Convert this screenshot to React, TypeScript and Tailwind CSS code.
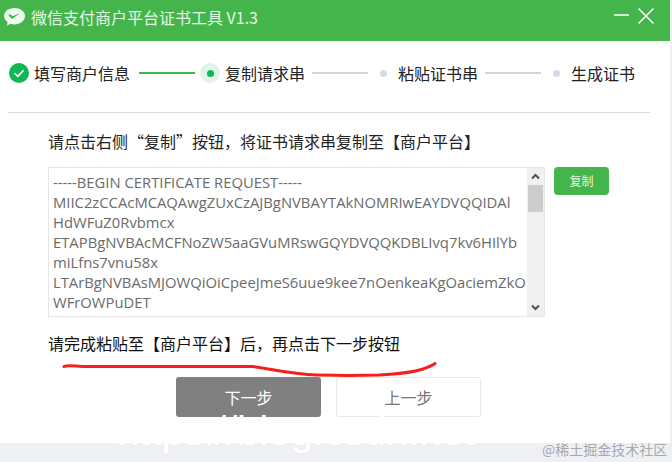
import React from 'react';

const certLines = [
  '-----BEGIN CERTIFICATE REQUEST-----',
  'MIIC2zCCAcMCAQAwgZUxCzAJBgNVBAYTAkNOMRIwEAYDVQQIDAl',
  'HdWFuZ0Rvbmcx',
  'ETAPBgNVBAcMCFNoZW5aaGVuMRswGQYDVQQKDBLIvq7kv6HIlYb',
  'miLfns7vnu58x',
  'LTArBgNVBAsMJOWQiOiCpeeJmeS6uue9kee7nOenkeaKgOaciemZkO',
  'WFrOWPuDET',
];

const Done = () => (
  <svg width="20" height="20" viewBox="0 0 20 20" className="shrink-0">
    <circle cx="10" cy="10" r="10" fill="#0fb853" />
    <path d="M5.500 10.200 8.800 13.300 14.600 7.200" fill="none" stroke="#fff" strokeWidth="1.600" />
  </svg>
);

const Line = ({ active }: { active?: boolean }) => (
  <div className={`h-[2px] w-14 shrink-0 ${active ? 'bg-[#43b54b]' : 'bg-[#d3d3d6]'}`} />
);

const Pending = () => (
  <div className="w-[7px] h-[7px] rounded-full bg-[#d5d9e6] shrink-0" />
);

export default function App() {
  return (
    <div className="relative w-[672px] h-[462px] bg-[#eff0f4] overflow-hidden font-['Noto_Sans_CJK_SC','Liberation_Sans',sans-serif]">
      <div className="w-[670px] h-[443px] bg-white flex flex-col">
        <header className="h-[41px] bg-[#43b54b] flex items-center shrink-0 pl-[3px] pr-4">
          <svg width="23" height="20" viewBox="0 0 23 20" className="shrink-0 mb-[7px]">
            <path d="M11.500 1C5.600 1 1 4.600 1 9c0 2.400 1.400 4.600 3.600 6L4 18.700l3.600-1.900c1.200.4 2.500.6 3.900.6 5.800 0 10.500-3.900 10.500-8.400S17.300 1 11.500 1Z" fill="#eef9ef" />
            <path d="M5.500 8.300l3.600 3.700 8.200-6-7.600 3.200-2.800-2.200-1.400 1.300Z" fill="#43b54b" />
          </svg>
          <span className="ml-[5px] mb-[7px] text-[16px] leading-5 text-[#e6f6e7]">
            微信支付商户平台证书工具 V1.3
          </span>
          <svg width="40" height="16" viewBox="0 0 40 16" className="ml-auto mb-[9px] shrink-0">
            <path d="M0 7H15M24.500 .5 39.500 15.500M39.500 .5 24.500 15.500" stroke="#fff" strokeWidth="1.500" fill="none" />
          </svg>
        </header>

        <div className="flex items-center h-[20px] mt-[22px] pl-[9px] text-[16px] text-[#222]">
          <Done />
          <span className="ml-[5px] w-[96px]">填写商户信息</span>
          <div className="ml-[9px]"><Line active /></div>
          <div className="ml-[5px] w-5 h-5 rounded-full bg-[#e2f4e7] flex items-center justify-center shrink-0">
            <div className="w-[7px] h-[7px] rounded-full bg-[#0fb853]" />
          </div>
          <span className="ml-[5px] w-[80px]">复制请求串</span>
          <div className="ml-[7px]"><Line /></div>
          <div className="ml-[12px]"><Pending /></div>
          <span className="ml-[11px] w-[80px]">粘贴证书串</span>
          <div className="ml-[7px]"><Line /></div>
          <div className="ml-[12px]"><Pending /></div>
          <span className="ml-[11px]">生成证书</span>
        </div>

        <div className="h-px bg-[#d9d9d9] mt-[29px] ml-2 mr-5" />

        <p className="mt-[18px] ml-[48px] text-[16px] leading-5 text-[#222]">
          请点击右侧“复制”按钮，将证书请求串复制至【商户平台】
        </p>

        <div className="flex items-start mt-4 ml-[48px]">
          <div className="w-[497px] h-[150px] border border-[#e6e6e6] flex overflow-hidden">
            <div className="flex-1 min-w-0 pl-[4px] pt-[4px] text-[14.800px] leading-[20px] text-[#6b6b6b] font-['Open_Sans','Noto_Sans',sans-serif] whitespace-nowrap overflow-hidden">
              {certLines.map((line) => (
                <div key={line}>{line}</div>
              ))}
            </div>
            <div className="w-[17px] bg-[#f0f0f0] flex flex-col items-center shrink-0">
              <svg width="17" height="17" viewBox="0 0 17 17">
                <path d="M5 10.500 8.500 7l3.500 3.500" stroke="#505050" strokeWidth="2" fill="none" />
              </svg>
              <div className="w-[15px] h-[27px] bg-[#cdcdcd]" />
              <svg width="17" height="17" viewBox="0 0 17 17" className="mt-auto">
                <path d="M5 6.500 8.500 10 12 6.500" stroke="#505050" strokeWidth="2" fill="none" />
              </svg>
            </div>
          </div>
          <button className="ml-[9px] w-[55px] h-7 rounded-[4px] bg-[#43b54b] text-[12px] text-[#e6f6e7]">复制</button>
        </div>

        <p className="mt-[16px] ml-[48px] text-[16px] leading-5 text-[#111]">
          请完成粘贴至【商户平台】后，再点击下一步按钮
        </p>

        <div className="flex gap-[15px] mt-6 pl-[176px]">
          <button className="w-[145px] h-10 rounded-[3px] bg-[#808080] text-[16px] text-white">下一步</button>
          <button className="w-[145px] h-10 rounded-[3px] border border-[#e8e8e8] bg-white text-[16px] text-[#777]">上一步</button>
        </div>
      </div>
      {/* hand drawn underline from the screenshot */}
      <svg width="672" height="462" viewBox="0 0 672 462" className="absolute left-0 top-0 pointer-events-none">
        <path d="M64 366.500c4-2 12 0 24 0 50 0 115 0 165 0 20 3 40 8 64 8.500 20 .5 45 .5 62 0 18-1 32-2 44-6 5-2 9-3 12-5.500" fill="none" stroke="#f5201c" strokeWidth="3" strokeLinecap="round" />
      </svg>
      {/* white url watermark that sits over the screenshot */}
      <span className="absolute left-[117px] top-[411px] text-[40px] leading-10 text-white whitespace-nowrap font-['Liberation_Sans',sans-serif]">https://blog.csdn.net</span>
      <span className="absolute left-[542px] top-[441px] text-[14px] leading-4 text-[#a9a9ad] whitespace-nowrap">@稀土掘金技术社区</span>
    </div>
  );
}
